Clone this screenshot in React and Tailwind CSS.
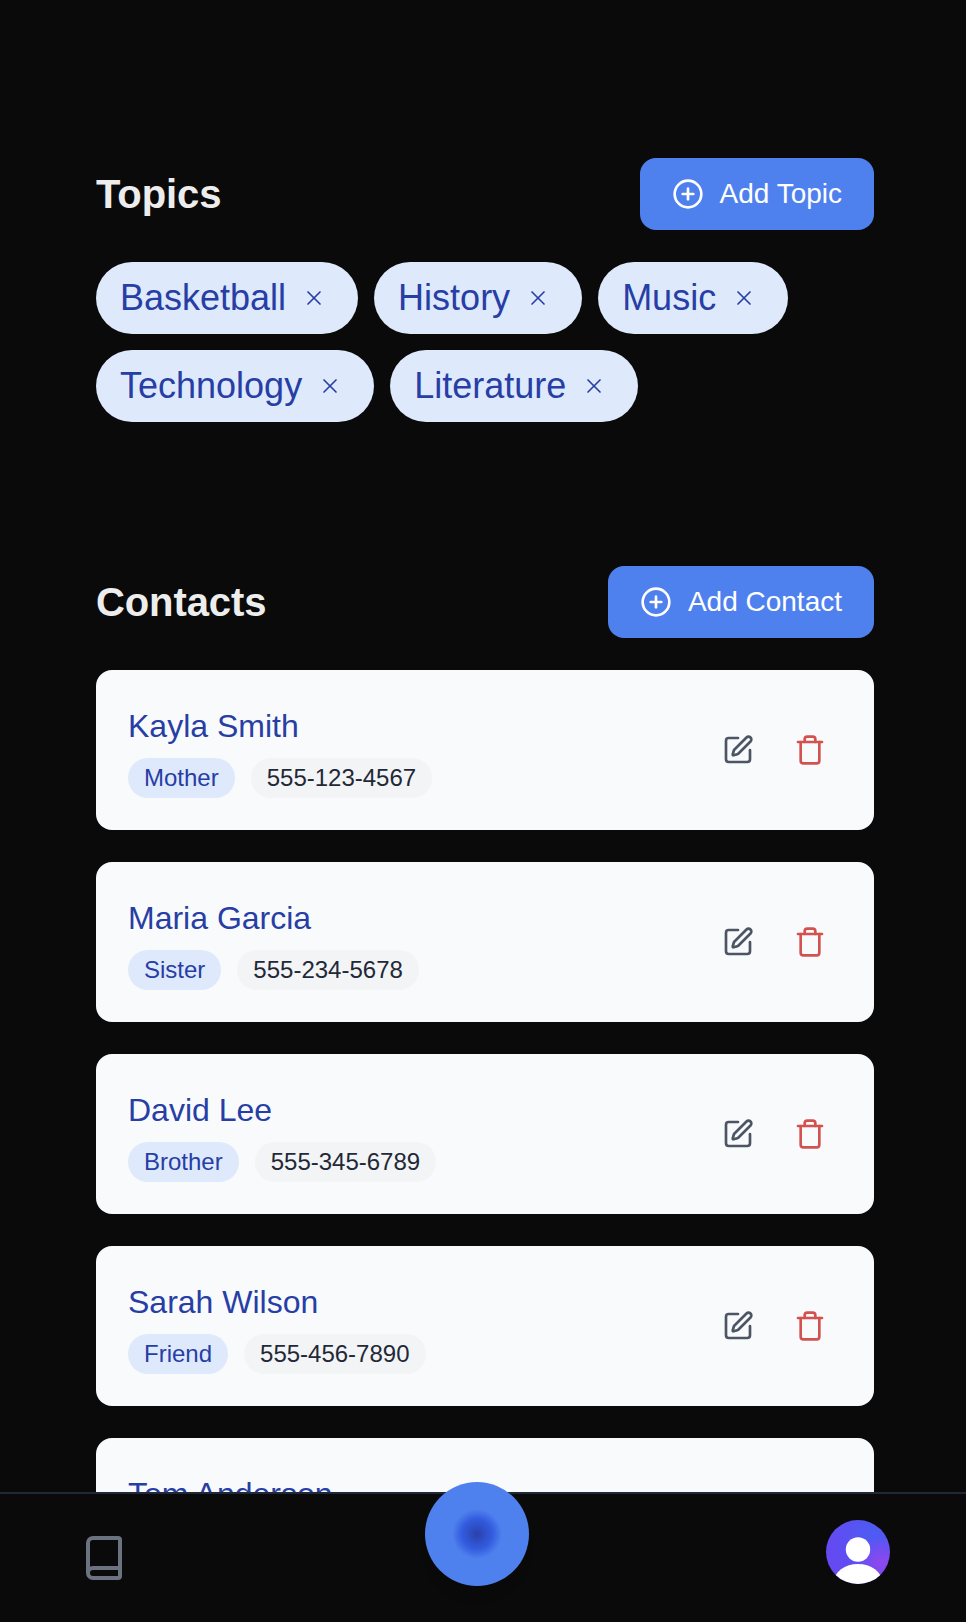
import React, { useState } from 'react'
import { Book, CirclePlus, SquarePen, Trash, X } from 'lucide-react';

const initialTopics = ['Basketball', 'History', 'Music', 'Technology', 'Literature'];

const initialContacts = [
    { id: 1, name: 'Kayla Smith', relation: 'Mother', phone: '555-123-4567' },
    { id: 2, name: 'Maria Garcia', relation: 'Sister', phone: '555-234-5678' },
    { id: 3, name: 'David Lee', relation: 'Brother', phone: '555-345-6789' },
    { id: 4, name: 'Sarah Wilson', relation: 'Friend', phone: '555-456-7890' },
    { id: 5, name: 'Tom Anderson', relation: 'Friend', phone: '555-567-8901' },
];

const SectionHeader = ({ title, action }) => (
    <div className="flex items-center justify-between mb-8">
        <h2 className="text-[40px] leading-[58px] tracking-[-0.1px] font-bold text-[#ededed]">{title}</h2>
        <button className="flex items-center gap-4 px-8 py-4 rounded-2xl bg-[#4f81ee] text-white text-[28px] leading-10 hover:cursor-pointer">
            <CirclePlus size={32} />
            {action}
        </button>
    </div>
);

const TopicChip = ({ topic, onRemove }) => (
    <div className="flex items-center h-[72px] px-6 rounded-full bg-[#dee9fc] text-[#273ea5] text-4xl">
        <span>{topic}</span>
        <button onClick={onRemove} aria-label={`Remove ${topic}`} className="ml-2 p-2 hover:cursor-pointer">
            <X size={24} strokeWidth={1.65} />
        </button>
    </div>
);

const ContactCard = ({ contact, onDelete }) => (
    <div className="flex items-center justify-between p-8 rounded-2xl bg-[#f9fafc]">
        <div>
            <h3 className="text-[32px] leading-[48px] text-[#273ea5]">{contact.name}</h3>
            <div className="flex items-center gap-4 mt-2 text-2xl leading-10">
                <span className="px-4 h-10 rounded-full leading-10 bg-[#dee9fc] text-[#273ea5]">{contact.relation}</span>
                <span className="px-4 h-10 rounded-full leading-10 bg-[#f3f4f6] text-[#1f2937]">{contact.phone}</span>
            </div>
        </div>

        {/* Row actions */}
        <div className="flex items-center gap-2">
            <button aria-label="Edit contact" className="p-4 text-[#4b5563] hover:cursor-pointer">
                <SquarePen size={32} />
            </button>
            <button onClick={onDelete} aria-label="Delete contact" className="p-4 text-[#d4524e] hover:cursor-pointer">
                <Trash size={32} />
            </button>
        </div>
    </div>
);

const Avatar = () => (
    <div className="w-16 h-16 rounded-full overflow-hidden bg-[radial-gradient(circle_at_86%_68%,#9048ee_0%,#6c47f800_38%),radial-gradient(circle_at_75%_20%,#4c5cf3_0%,#6549f1_70%)]">
        <svg viewBox="0 0 64 64" fill="#fff">
            <circle cx="32" cy="29.5" r="12.2" />
            <ellipse cx="32" cy="62" rx="24" ry="18" />
        </svg>
    </div>
);

const BottomNav = () => (
    <nav className="fixed bottom-0 left-0 right-0 h-[130px] flex items-start justify-between pl-20 pr-[76px] bg-[#0a0a0a] border-t-2 border-[#1f2937]">
        <button aria-label="Library" className="mt-10 text-[#6b7280] hover:cursor-pointer">
            <Book size={48} />
        </button>

        {/* Raised record button */}
        <button aria-label="Record" className="-mt-3 w-[104px] h-[104px] rounded-full flex items-center justify-center bg-[#4f81ee] shadow-[0_14px_14px_-8px_rgba(0,0,0,0.15)] hover:cursor-pointer">
            <span className="w-[50px] h-[50px] rounded-full bg-[radial-gradient(closest-side,#2a41ab_0%,#335bdf_60%,#4f81ee_100%)]" />
        </button>

        <button aria-label="Profile" className="mt-[26px] hover:cursor-pointer">
            <Avatar />
        </button>
    </nav>
);

export default function App() {
    const [topics, setTopics] = useState(initialTopics);
    const [contacts, setContacts] = useState(initialContacts);

    return (
        <div className="h-screen overflow-hidden bg-[#0a0a0a] font-['Liberation_Sans',Arial,sans-serif]">
            <main className="pl-24 pr-[92px] pt-[158px]">
                <section>
                    <SectionHeader title="Topics" action="Add Topic" />
                    <div className="flex flex-wrap gap-4">
                        {topics.map((topic) => (
                            <TopicChip
                                key={topic}
                                topic={topic}
                                onRemove={() => setTopics(topics.filter((t) => t !== topic))}
                            />
                        ))}
                    </div>
                </section>

                <section className="mt-36">
                    <SectionHeader title="Contacts" action="Add Contact" />
                    <div className="flex flex-col gap-8">
                        {contacts.map((contact) => (
                            <ContactCard
                                key={contact.id}
                                contact={contact}
                                onDelete={() => setContacts(contacts.filter((c) => c.id !== contact.id))}
                            />
                        ))}
                    </div>
                </section>
            </main>

            <BottomNav />
        </div>
    )
}
